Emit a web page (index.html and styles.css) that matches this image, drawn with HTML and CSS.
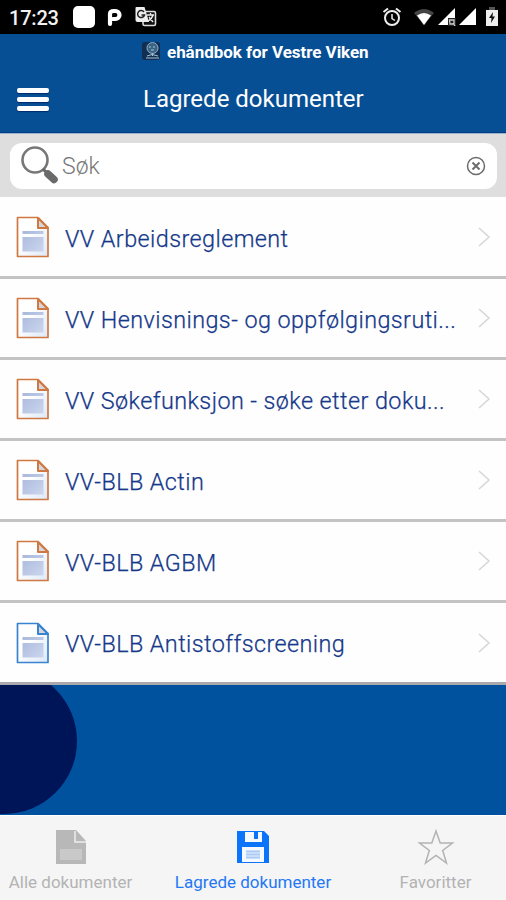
FILE: index.html
```html
<!DOCTYPE html>
<html lang="no">
<head>
<meta charset="utf-8">
<title>Lagrede dokumenter</title>
<link rel="stylesheet" href="styles.css">
</head>
<body>
<svg class="defs" width="0" height="0" aria-hidden="true">
  <defs>
    <linearGradient id="shade" x1="0" y1="0" x2="1" y2="1"><stop offset="0" stop-color="#a9b8dc"/><stop offset="1" stop-color="#ccd6ed"/></linearGradient>
    <linearGradient id="paper" x1="0" y1="0" x2="1" y2="1"><stop offset=".4" stop-color="#fff"/><stop offset="1" stop-color="#dce8f8"/></linearGradient>
    <symbol id="doc" viewBox="0 0 34 42">
      <path d="M1.500 1.500H22L32 11.500V40.500H1.500Z" fill="url(#paper)" stroke="currentColor" stroke-width="1.700" stroke-linejoin="round"/>
      <path d="M22 2V12H32Z" fill="#d5d7dc" stroke="currentColor" stroke-width="2" stroke-linejoin="round"/>
      <path d="M6.500 15H27.500V18H6.500ZM6.500 21H27.500V35.500H6.500Z" fill="url(#shade)"/>
    </symbol>
    <symbol id="chev" viewBox="0 0 14 22"><path d="M2 2L12 11L2 20" fill="none" stroke="#d6d6d6" stroke-width="1.500"/></symbol>
  </defs>
</svg>
<div class="status">
  <span class="time">17:23</span>
  <span class="tile"></span>
  <svg class="park" width="16" height="20" viewBox="0 0 16 20"><path d="M3 17V12M3 11V7Q3 4 7 4H8.500A4 4 0 0 1 8.500 12H6" fill="none" stroke="#fff" stroke-width="4.200" stroke-linecap="round"/></svg>
  <svg class="translate" width="22" height="22" viewBox="0 0 22 22"><rect x="8" y="5.500" width="12.500" height="14" rx="1.500" fill="#111" stroke="#ddd" stroke-width="1.600"/><path d="M1.500 1H9.500L14 16H2.500Q.5 16 .5 14V2Q.5 1 1.500 1Z" fill="#eee"/><path d="M9 6A3.500 3.500 0 1 0 9.500 9H6.500" fill="none" stroke="#222" stroke-width="1.500"/><path d="M12 9H19M15.500 7V9M18 9Q17 13 13 15M14 11L18 16" fill="none" stroke="#eee" stroke-width="1.300"/></svg>
  <span class="grow"></span>
  <svg class="alarm" width="20" height="20" viewBox="0 0 20 20" fill="none" stroke="#eee" stroke-width="2"><circle cx="10" cy="11" r="7"/><path d="M1.500 5L6 1.500M18.500 5L14 1.500"/><path d="M10 7V11.500L13 13.500" stroke-width="1.500"/></svg>
  <svg class="wifi" width="22" height="18" viewBox="0 0 22 18"><path d="M1 5Q11-3 21 5L11 17Z" fill="#444"/><path d="M4 7.500Q11 2.500 18 7.500L11 17Z" fill="#fff"/></svg>
  <svg class="sig" width="18" height="18" viewBox="0 0 18 18"><path d="M0 17L17 0V17Z" fill="#fff"/><path d="M10 10H18V18H10Z" fill="#222"/><path d="M11.500 12H16V16H12ZM15 15L17 18" fill="none" stroke="#ccc" stroke-width="1.300"/></svg>
  <svg class="sig2" width="18" height="18" viewBox="0 0 18 18"><path d="M0 17L17 0V17Z" fill="#fff"/></svg>
  <svg class="battery" width="12" height="20" viewBox="0 0 12 20"><path d="M3 0H9V3H3Z" fill="#555"/><path d="M0 3H12V19H0Z" fill="#eee"/><path d="M7 5L3 11H5.500L5 16L9 9.500H6.500Z" fill="#111"/></svg>
</div>
<header class="header">
  <div class="brand">
    <svg width="20" height="20" viewBox="0 0 20 20"><rect x="1" y="1" width="18" height="18" rx="3" fill="#102f52"/><circle cx="11.500" cy="7" r="5.500" fill="#3a6385" stroke="#8daec6"/><path d="M8 6H10M12 6H14M10 9H13M11.500 12V15M6 15Q11 12 17 15M5 17H18" stroke="#a9c2d3" fill="none"/></svg>
    <span>ehåndbok for Vestre Viken</span>
  </div>
  <div class="titlebar">
    <div class="menu"><i></i><i></i><i></i></div>
    <h1>Lagrede dokumenter</h1>
  </div>
</header>
<div class="search">
  <div class="field">
    <svg class="glass" width="40" height="40" viewBox="0 0 40 40"><circle cx="15" cy="14" r="12.500" fill="none" stroke="#777" stroke-width="2.600"/><path d="M23 23L28 28" stroke="#666" stroke-width="3"/><path d="M28 28L34 33.500" stroke="#6a6a6a" stroke-width="7.500" stroke-linecap="round"/></svg>
    <span class="placeholder">Søk</span>
    <svg width="20" height="20" viewBox="0 0 20 20" fill="none" stroke="#6c6c6c"><circle cx="10" cy="10" r="8.500" stroke-width="1.500"/><path d="M6.500 6.500L13.500 13.500M13.500 6.500L6.500 13.500" stroke-width="2"/></svg>
  </div>
</div>
<main class="content">
  <ul class="list">
    <li><svg class="doc"><use href="#doc"/></svg><span>VV Arbeidsreglement</span><svg class="chev"><use href="#chev"/></svg></li>
    <li><svg class="doc"><use href="#doc"/></svg><span>VV Henvisnings- og oppfølgingsruti...</span><svg class="chev"><use href="#chev"/></svg></li>
    <li><svg class="doc"><use href="#doc"/></svg><span>VV Søkefunksjon - søke etter doku...</span><svg class="chev"><use href="#chev"/></svg></li>
    <li><svg class="doc"><use href="#doc"/></svg><span>VV-BLB Actin</span><svg class="chev"><use href="#chev"/></svg></li>
    <li><svg class="doc"><use href="#doc"/></svg><span>VV-BLB AGBM</span><svg class="chev"><use href="#chev"/></svg></li>
    <li><svg class="doc blue"><use href="#doc"/></svg><span>VV-BLB Antistoffscreening</span><svg class="chev"><use href="#chev"/></svg></li>
  </ul>
  <div class="backdrop"><div class="disc"></div></div>
</main>
<nav class="tabs">
  <div class="tab all">
    <svg width="32" height="36" viewBox="0 0 32 36"><path d="M1 1H21L31 12V35H1Z" fill="#b8b8b8"/><path d="M20 2V13H31" fill="none" stroke="#ededed" stroke-width="1.500"/><path d="M5 20H27V31H5Z" fill="#c9c9c9"/></svg>
    <span>Alle dokumenter</span>
  </div>
  <div class="tab saved">
    <svg width="34" height="36" viewBox="0 0 34 36"><path d="M1 2H28L33 7V34H1Z" fill="#0b74fa"/><path d="M9 3H26V13H9Z" fill="#f5f9ff"/><path d="M18 3H22V10H18Z" fill="#0b74fa"/><path d="M6 18H28V33H6Z" fill="#f5f9ff"/><path d="M10 21H24V30H10Z" fill="#d3e3f8"/><path d="M10 22.500H24M10 25.500H24M10 28.500H24" stroke="#a9cbf5" stroke-width="1.500"/></svg>
    <span>Lagrede dokumenter</span>
  </div>
  <div class="tab fav">
    <svg width="38" height="36" viewBox="0 0 38 36"><path d="M19 2L23.200 14H35.500L25.700 21.500L29.500 34L19 26.500L8.500 34L12.300 21.500L2.500 14H14.800Z" fill="none" stroke="#b3b3b3" stroke-width="1.500"/></svg>
    <span>Favoritter</span>
  </div>
</nav>
</body>
</html>
```
FILE: styles.css
```css
* { box-sizing: border-box; }
body { margin: 0; width: 506px; height: 900px; overflow: hidden; display: flex; flex-direction: column; font-family: Roboto, "Liberation Sans", sans-serif; background: #00529f; }
svg { display: block; flex: none; }
.defs { position: absolute; }
.status { flex: none; height: 34px; background: #000; display: flex; align-items: center; padding: 0 8px 0 9px; color: #f2f2f2; }
.time { font-size: 20px; font-weight: 500; width: 64px; letter-spacing: -.2px; padding-top: 2px; }
.tile { width: 22px; height: 22px; background: #fff; border-radius: 5px; }
.park { margin-left: 12px; }
.translate { margin-left: 12px; }
.grow { flex: 1; }
.alarm { margin-right: 1px; }
.wifi { margin-left: 10px; }
.sig { margin-left: 3px; }
.sig2 { margin-left: 3px; }
.battery { margin-left: 9px; }
.header { flex: none; height: 99px; background: #074f94; color: #fff; border-bottom: 1px solid #003c82; }
.brand { height: 34px; display: flex; align-items: center; padding: 0 0 0 141px; gap: 6px; font-size: 17px; font-weight: 700; }
.brand span { padding-top: 2px; letter-spacing: -.04px; }
.titlebar { height: 62px; display: flex; align-items: center; padding-left: 17px; }
.menu { width: 32px; display: flex; flex-direction: column; gap: 4px; }
.menu i { height: 5px; border-radius: 2px; background: #fff; box-shadow: 0 1px 1px #00286c; }
h1 { margin: 0 0 0 94px; font-size: 24px; font-weight: 400; }
.search { flex: none; height: 64px; background: #dedede; padding: 9px 9px 9px 10px; border-top: 1px solid #9db3ce; }
.field { height: 46px; background: #fff; border-radius: 12px; display: flex; align-items: center; padding: 0 11px 0 10px; }
.placeholder { flex: 1; margin-left: 2px; padding-top: 1px; font-size: 23px; font-weight: 300; color: #777; }
.content { flex: 1; min-height: 0; display: flex; flex-direction: column; }
.list { list-style: none; margin: 0; padding: 0; flex: none; }
.list li { height: 81px; background: #fefefe; border-bottom: 3px solid #c3c3c3; display: flex; align-items: center; padding: 0 15px 0 16px; }
.list li:first-child { height: 82px; padding-top: 1px; }
.list li:last-child { height: 82px; border-bottom-color: #aaa9ad; }
.doc { width: 34px; height: 42px; color: #cf7841; }
.blue { color: #3984cf; }
.list span { flex: 1; margin-left: 15px; padding-top: 3px; font-size: 23.4px; font-weight: 300; color: #15388a; -webkit-text-stroke: .25px #15388a; white-space: nowrap; letter-spacing: .42px; }
.chev { width: 14px; height: 22px; }
.backdrop { flex: 1; position: relative; overflow: hidden; background: #00529f; }
.disc { position: absolute; left: -69px; top: -17px; width: 146px; height: 146px; border-radius: 50%; background: #001458; }
.tabs { flex: none; height: 85px; background: #f5f5f5; border-top: 1px solid #fff; display: grid; grid-template-columns: 141px 224px 141px; }
.tab { display: flex; flex-direction: column; align-items: center; padding-top: 13px; font-size: 17px; color: #b3b3b3; white-space: nowrap; }
.tab span { margin-top: 7px; }
.saved { color: #2378f5; }
```
